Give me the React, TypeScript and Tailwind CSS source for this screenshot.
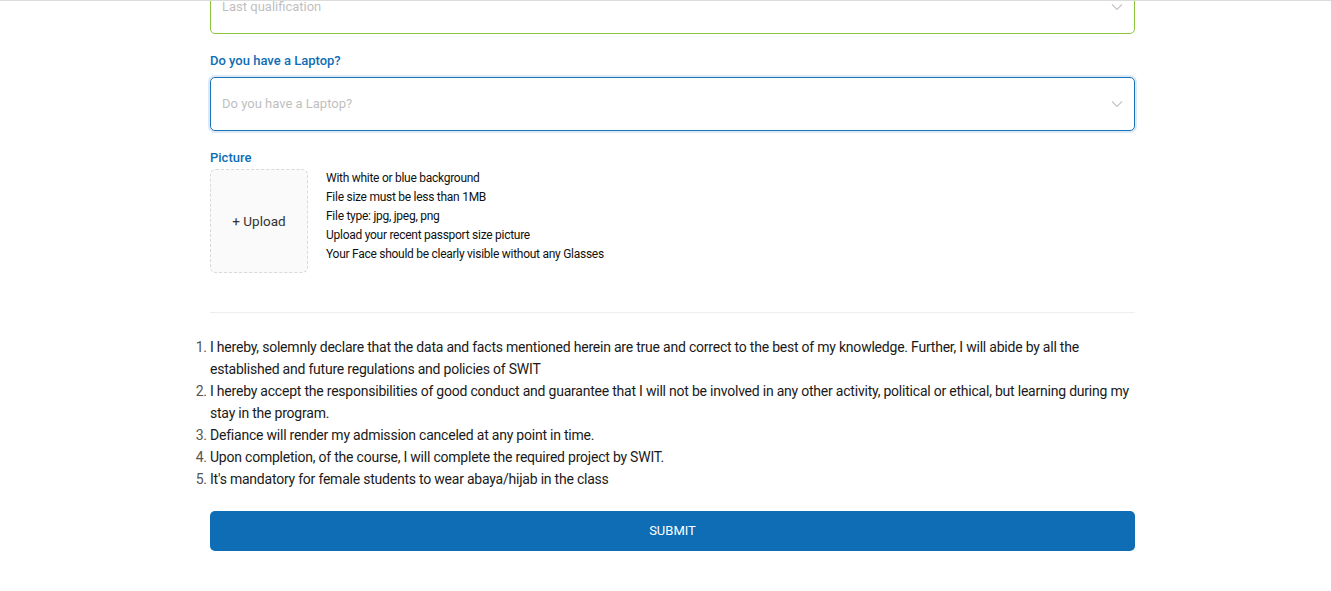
import React from 'react';

const rules = [
  'With white or blue background',
  'File size must be less than 1MB',
  'File type: jpg, jpeg, png',
  'Upload your recent passport size picture',
  'Your Face should be clearly visible without any Glasses',
];

const declarations = [
  'I hereby, solemnly declare that the data and facts mentioned herein are true and correct to the best of my knowledge. Further, I will abide by all the established and future regulations and policies of SWIT',
  'I hereby accept the responsibilities of good conduct and guarantee that I will not be involved in any other activity, political or ethical, but learning during my stay in the program.',
  'Defiance will render my admission canceled at any point in time.',
  'Upon completion, of the course, I will complete the required project by SWIT.',
  "It's mandatory for female students to wear abaya/hijab in the class",
];

const Chevron = () => (
  <svg width="12" height="8" viewBox="0 0 12 8" fill="none" className="text-[#c4c4c4]">
    <path d="M1 1.5L6 6.5L11 1.5" stroke="currentColor" strokeWidth="1.1" />
  </svg>
);

const SelectBox = ({ placeholder, focused = false, green = false }: { placeholder: string; focused?: boolean; green?: boolean }) => (
  <div
    className={`flex items-center justify-between h-[54px] rounded-[5px] border pl-[11px] pr-[11px] bg-white ${
      green ? 'border-[#8cc63f]' : focused ? 'border-[#1a73b9] shadow-[0_0_0_2px_rgba(26,115,185,0.15)]' : 'border-[#d9d9d9]'
    }`}
  >
    <span className="text-[13px] text-[#bfbfbf]">{placeholder}</span>
    <Chevron />
  </div>
);

export default function App() {
  return (
    <div className="min-h-screen bg-white border-t border-[#dcdcdc] overflow-hidden" style={{ fontFamily: 'Roboto, "Noto Sans", sans-serif' }}>
      <div className="ml-[210px] w-[925px] mt-[-21px]">
        <SelectBox placeholder="Last qualification" green />

        <div className="mt-[16px] h-[22px] leading-[22px] mb-[5px] text-[13px] font-medium text-[#0e6db5]">Do you have a Laptop?</div>
        <SelectBox placeholder="Do you have a Laptop?" focused />

        <div className="mt-[16px] h-[22px] leading-[22px] text-[13px] font-medium text-[#0e6db5]">Picture</div>
        <div className="flex gap-[18px]">
          <div className="w-[98px] h-[104px] shrink-0 rounded-[6px] border border-dashed border-[#d9d9d9] bg-[#fafafa] flex items-center justify-center text-[13.5px] text-[#333]">
            + Upload
          </div>
          <ul className="text-[12px] leading-[19px] tracking-[-0.27px] text-[#111]">
            {rules.map((r) => (
              <li key={r}>{r}</li>
            ))}
          </ul>
        </div>

        <div className="mt-[39px] border-t border-[#eeeeee]" />

        <ol className="mt-[23px] list-decimal pl-0 text-[14px] leading-[22px] tracking-[-0.22px] text-[#1a1a1a] marker:text-[#555]">
          {declarations.map((d) => (
            <li key={d}>{d}</li>
          ))}
        </ol>

        <button className="mt-[21px] w-full h-[40px] rounded-[5px] bg-[#0e6db5] text-white text-[13px] uppercase">
          Submit
        </button>
      </div>
    </div>
  );
}
